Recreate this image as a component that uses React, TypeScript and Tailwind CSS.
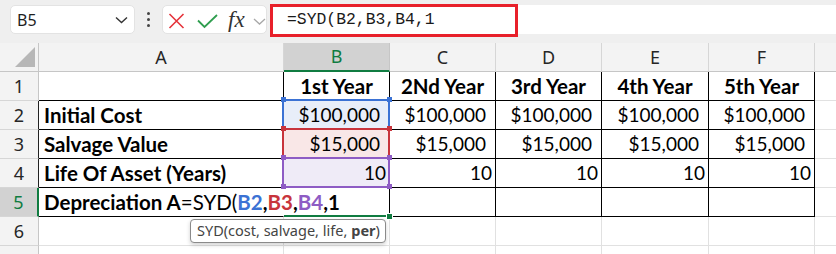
import React from 'react';

const cellFont = { fontFamily: 'Lato, "Liberation Sans", sans-serif' };

function HeaderCell({ w, label, selected }: { w: string; label: string; selected?: boolean }) {
  return (
    <div
      className={`${w} h-full shrink-0 flex items-center justify-center text-[18px] font-['Noto_Sans',sans-serif] ${
        selected
          ? 'bg-[#d2d2d2] text-[#107c41] border-r border-r-[#c6c6c6] border-b-2 border-b-[#107c41]'
          : 'bg-[#f3f3f3] text-[#262626] border-r border-r-[#d6d6d6] border-b border-b-[#c6c6c6]'
      }`}
    >
      {label}
    </div>
  );
}

function RowHead({ n, selected, dark }: { n: string; selected?: boolean; dark?: boolean }) {
  return (
    <div
      className={`w-[39px] h-full shrink-0 flex items-center justify-center text-[18px] font-['Noto_Sans',sans-serif] border-b border-b-[#d6d6d6] ${
        selected
          ? 'bg-[#d2d2d2] text-[#107c41] border-r-2 border-r-[#107c41]'
          : dark
          ? 'bg-[#f3f3f3] text-[#262626] border-r border-r-[#222222]'
          : 'bg-[#f3f3f3] text-[#262626] border-r border-r-[#c6c6c6]'
      }`}
    >
      {n}
    </div>
  );
}

const colW = ['w-[245px]', 'w-[106px]', 'w-[106px]', 'w-[106px]', 'w-[107px]', 'w-[106px]'];

function TCell({
  w,
  children,
  align = 'left',
  bold,
  extra = '',
}: {
  w: string;
  children?: React.ReactNode;
  align?: 'left' | 'right' | 'center' | 'money';
  bold?: boolean;
  extra?: string;
}) {
  const al =
    align === 'left'
      ? 'justify-start pl-[5px]'
      : align === 'center'
      ? 'justify-center'
      : align === 'money'
      ? 'justify-end pr-[9px]'
      : 'justify-end pr-[3px]';
  return (
    <div
      style={cellFont}
      className={`${w} h-full shrink-0 flex items-center text-black whitespace-nowrap border-r border-b border-black ${al} ${
        bold ? 'font-bold text-[20.5px]' : 'text-[19px]'
      } ${extra}`}
    >
      {children}
    </div>
  );
}

function GCell({ w, extra = '' }: { w: string; extra?: string }) {
  return <div className={`${w} h-full shrink-0 border-r border-b border-[#e1e1e1] ${extra}`} />;
}

export default function App() {
  const years = ['1st Year', '2Nd Year', '3rd Year', '4th Year', '5th Year'];
  return (
    <div className="w-[836px] h-[254px] overflow-hidden bg-white relative">
      {/* toolbar */}
      <div className="h-[43px] bg-[#efefef] flex items-start pt-[5px]">
        <div className="ml-[10px] w-[125px] h-[29px] bg-white rounded-[5px] border border-[#e3e3e3] flex items-center justify-between pl-[6px] pr-[6px]">
          <span className="text-[16px] text-[#1f1f1f] font-['Noto_Sans',sans-serif]">B5</span>
          <svg width="13" height="8" viewBox="0 0 13 8">
            <path d="M1 1.5 L6.5 6.5 L12 1.5" fill="none" stroke="#333" strokeWidth="1.4" />
          </svg>
        </div>
        <div className="w-[27px] h-[29px] flex flex-col items-center justify-center gap-[3px]">
          <div className="w-[3px] h-[3px] bg-[#444] rounded-full" />
          <div className="w-[3px] h-[3px] bg-[#444] rounded-full" />
          <div className="w-[3px] h-[3px] bg-[#444] rounded-full" />
        </div>
        <div className="w-[105px] h-[29px] bg-white rounded-[5px] border border-[#e3e3e3] relative">
          <svg className="absolute left-[5px] top-[7px]" width="17" height="16" viewBox="0 0 17 16">
            <path d="M1.5 1 L15.5 15 M15.5 1 L1.5 15" stroke="#e5333b" strokeWidth="1.6" fill="none" />
          </svg>
          <svg className="absolute left-[34px] top-[8px]" width="21" height="15" viewBox="0 0 21 15">
            <path d="M1 6.5 L7.5 13 L20 1" stroke="#2f9e4f" strokeWidth="1.8" fill="none" />
          </svg>
          <span className="absolute left-[65px] top-[0px] text-[23px] italic text-[#333] font-['Liberation_Serif',serif] leading-[27px]">
            fx
          </span>
          <svg className="absolute left-[90px] top-[12px]" width="13" height="7" viewBox="0 0 13 7">
            <path d="M1 1 L6.5 6 L12 1" fill="none" stroke="#a8a8a8" strokeWidth="1.3" />
          </svg>
        </div>
        <div className="ml-[3px] flex-1 h-[29px] bg-white rounded-l-[4px] relative">
          <div className="absolute left-0 top-[-1px] w-[248px] h-[33px] border-[3px] border-[#e8202a] flex items-center pl-[14px]">
            <span className="text-[16.4px] text-[#1a1a1a] font-['Liberation_Mono',monospace] leading-none">
              =SYD(B2,B3,B4,1
            </span>
          </div>
        </div>
      </div>

      {/* grid */}
      <div className="relative">
        <div className="flex h-[29px]">
          <div className="w-[39px] h-full shrink-0 bg-[#f3f3f3] border-r border-b border-[#c6c6c6] relative">
            <svg className="absolute left-[15px] top-[4px]" width="21" height="21" viewBox="0 0 21 21">
              <path d="M20 0 L20 20 L0 20 Z" fill="#b7b7b7" />
            </svg>
          </div>
          <HeaderCell w="w-[245px]" label="A" />
          <HeaderCell w="w-[106px]" label="B" selected />
          <HeaderCell w="w-[106px]" label="C" />
          <HeaderCell w="w-[106px]" label="D" />
          <HeaderCell w="w-[107px]" label="E" />
          <HeaderCell w="w-[106px]" label="F" />
          <HeaderCell w="w-[40px]" label="" />
        </div>

        {/* row 1 */}
        <div className="flex h-[29px]">
          <RowHead n="1" />
          <TCell w={colW[0]} />
          {years.map((y, i) => (
            <TCell key={y} w={colW[i + 1]} align="center" bold>
              {y}
            </TCell>
          ))}
          <GCell w="w-[40px]" />
        </div>

        {/* row 2 */}
        <div className="flex h-[29px]">
          <RowHead n="2" dark />
          <TCell w={colW[0]} bold>
            Initial Cost
          </TCell>
          {years.map((y, i) => (
            <TCell key={y} w={colW[i + 1]} align="money" extra={i === 0 ? 'bg-[#e8eef9]' : ''}>
              $100,000
            </TCell>
          ))}
          <GCell w="w-[40px]" />
        </div>

        {/* row 3 */}
        <div className="flex h-[29px]">
          <RowHead n="3" dark />
          <TCell w={colW[0]} bold>
            Salvage Value
          </TCell>
          {years.map((y, i) => (
            <TCell key={y} w={colW[i + 1]} align="money" extra={i === 0 ? 'bg-[#f9e7e7]' : ''}>
              $15,000
            </TCell>
          ))}
          <GCell w="w-[40px]" />
        </div>

        {/* row 4 */}
        <div className="flex h-[29px]">
          <RowHead n="4" dark />
          <TCell w={colW[0]} bold>
            Life Of Asset (Years)
          </TCell>
          {years.map((y, i) => (
            <TCell key={y} w={colW[i + 1]} align="right" extra={i === 0 ? 'bg-[#efebf7]' : ''}>
              10
            </TCell>
          ))}
          <GCell w="w-[40px]" />
        </div>

        {/* row 5 */}
        <div className="flex h-[29px]">
          <RowHead n="5" selected />
          <TCell w={colW[0]} bold extra="!border-r-transparent overflow-visible relative z-10">
            <span>Depreciation A</span>
            <span className="font-normal">=SYD(</span>
            <span className="text-[#3b72d4]">B2</span>
            <span>,</span>
            <span className="text-[#c8343c]">B3</span>
            <span>,</span>
            <span className="text-[#8e5cc4]">B4</span>
            <span>,1</span>
          </TCell>
          <TCell w={colW[1]} extra="!border-b-2 !border-b-[#107c41]" />
          <TCell w={colW[2]} />
          <TCell w={colW[3]} />
          <TCell w={colW[4]} />
          <TCell w={colW[5]} />
          <GCell w="w-[40px]" />
        </div>

        {/* row 6 */}
        <div className="flex h-[29px]">
          <RowHead n="6" />
          <GCell w={colW[0]} />
          <GCell w={colW[1]} />
          <GCell w={colW[2]} />
          <GCell w={colW[3]} />
          <GCell w={colW[4]} />
          <GCell w={colW[5]} />
          <GCell w="w-[40px]" />
        </div>
        {/* row 7 (cut off) */}
        <div className="flex h-[29px]">
          <RowHead n="" />
          <GCell w={colW[0]} />
          <GCell w={colW[1]} />
          <GCell w={colW[2]} />
          <GCell w={colW[3]} />
          <GCell w={colW[4]} />
          <GCell w={colW[5]} />
          <GCell w="w-[40px]" />
        </div>

        {/* range highlight overlays */}
        <div className="absolute left-[282px] top-[56px] w-[108px] h-[31px] border-2 border-[#3b72d4] pointer-events-none" />
        <div className="absolute left-[282px] top-[85px] w-[108px] h-[31px] border-2 border-[#c8343c] pointer-events-none" />
        <div className="absolute left-[282px] top-[114px] w-[108px] h-[31px] border-2 border-[#8e5cc4] pointer-events-none" />
        {/* corner handles */}
        <div className="absolute left-[281px] top-[54px] w-[5px] h-[5px] bg-[#3b72d4]" />
        <div className="absolute left-[387px] top-[54px] w-[5px] h-[5px] bg-[#3b72d4]" />
        <div className="absolute left-[281px] top-[83px] w-[5px] h-[5px] bg-[#c8343c]" />
        <div className="absolute left-[387px] top-[83px] w-[5px] h-[5px] bg-[#c8343c]" />
        <div className="absolute left-[281px] top-[112px] w-[5px] h-[5px] bg-[#8e5cc4]" />
        <div className="absolute left-[387px] top-[112px] w-[5px] h-[5px] bg-[#8e5cc4]" />
        <div className="absolute left-[281px] top-[141px] w-[5px] h-[5px] bg-[#8e5cc4]" />
        <div className="absolute left-[387px] top-[141px] w-[5px] h-[5px] bg-[#8e5cc4]" />
        {/* fill handle */}
        <div className="absolute left-[386px] top-[170px] w-[5px] h-[5px] bg-[#107c41] border border-white box-content" />

        {/* tooltip */}
        <div className="absolute left-[190px] top-[176px] w-[196px] h-[24px] bg-white border border-[#8a8a8a] rounded-[4px] shadow-[0_2px_4px_rgba(0,0,0,0.18)] flex items-center pl-[6px] text-[14.5px] text-[#444] font-['Noto_Sans',sans-serif] whitespace-nowrap z-20">
          SYD(cost, salvage, life, <span className="font-bold ml-[4px]">per</span>)
        </div>
      </div>
    </div>
  );
}
